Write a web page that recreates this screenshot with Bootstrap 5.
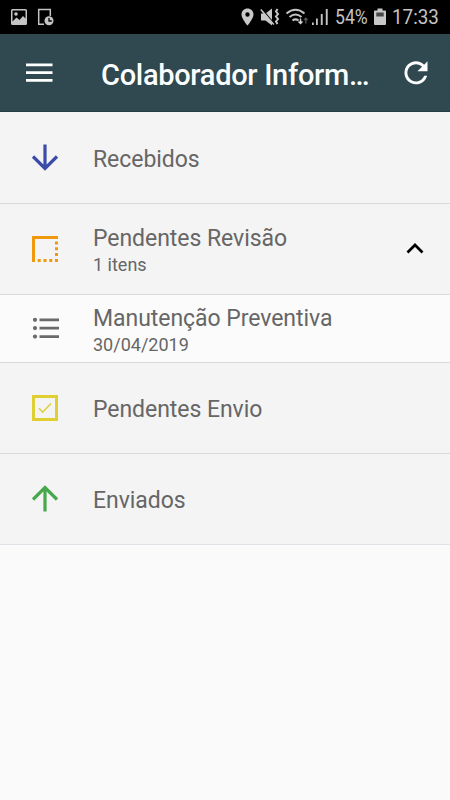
<!DOCTYPE html>
<html lang="pt-BR">
<head>
<meta charset="utf-8">
<meta name="viewport" content="width=device-width, initial-scale=1">
<title>Colaborador Informações</title>
<link href="https://cdn.jsdelivr.net/npm/bootstrap@5.3.0/dist/css/bootstrap.min.css" rel="stylesheet">
<style>
body{font-family:Roboto,"Liberation Sans",sans-serif;background:#fafafa;min-height:100vh;overflow:hidden}
svg{display:block;flex:none}
.status{height:34px;background:#000;color:#c4c4c4;font-size:20px;line-height:36px;padding:0 12px 0 10px}
.clock,.battery-text{white-space:nowrap}
.battery-text{width:34px;margin-left:5px}
.clock{width:46px;margin-left:6px}
.narrow{display:inline-block;transform-origin:0 50%}
.battery-text .narrow{transform:scale(.88,1.05)}
.clock .narrow{transform:scale(.94,1.05)}
.appbar{height:78px;background:#30484f;padding:0 20px 0 25px;border-bottom:1px solid #263d43}
.title{font-size:29px;letter-spacing:-.3px;font-weight:500;line-height:34px;color:#fafefe;width:275px;margin:4px 0 0 48px;white-space:nowrap}
.menu-list .list-group-item{height:91px;padding:0 21px 0 31px;gap:34px;background:#f4f4f4;border-color:#dadada;border-width:0 0 1px;color:#666}
.menu-list .list-group-item:first-child{height:92px}
.menu-list .sub-item{height:68px;background:#fbfbfb}
.label{font-size:23px;letter-spacing:-.05px;line-height:28px;padding-top:4px}
.detail{font-size:18px;line-height:24px;margin-top:-1px}
div.label{padding-top:3px}
div.label+.detail{margin-top:0}
.sub-item .label{padding-top:4px}
</style>
<script src="https://cdn.jsdelivr.net/npm/bootstrap@5.3.0/dist/js/bootstrap.bundle.min.js"></script>
</head>
<body>
<header>
  <div class="status d-flex align-items-center">
    <svg width="46" height="34" viewBox="10 0 46 34">
      <path fill="#c4c4c4" fill-rule="evenodd" d="M12.500 9h13q1.500 0 1.500 1.500v13q0 1.500-1.500 1.500h-13q-1.500 0-1.500-1.500v-13q0-1.500 1.500-1.500zM12.500 10.500v11l4-4 3 2.500 3.500-4 2.500 2.500v-8z"/>
      <circle cx="16" cy="14" r="1.800" fill="#c4c4c4"/>
      <path d="M44 24.200H38.700V9.500H50.300V16" fill="none" stroke="#c4c4c4" stroke-width="1.500"/>
      <circle cx="49" cy="20.800" r="4.500" fill="#c4c4c4"/><path d="M49 18v3h2.800" fill="none" stroke="#000" stroke-width="1.300"/>
    </svg>
    <svg class="ms-auto" width="90" height="34" viewBox="240 0 90 34">
      <path fill="#c8c8c8" fill-rule="evenodd" d="M247.500 8.500c-3.500 0-6 2.600-6 6 0 4.300 6 11 6 11s6-6.700 6-11c0-3.400-2.500-6-6-6zm0 3.800a2.200 2.200 0 1 1 0 4.400 2.200 2.200 0 0 1 0-4.400z"/>
      <path fill="#c8c8c8" d="M261 13.500h4.500l6.500-5v17l-6.500-5H261z"/>
      <path d="M261.500 8.500l12.500 15" stroke="#000" stroke-width="1.200"/><path d="M260.800 9.500l13 15" stroke="#c8c8c8" stroke-width="1.500"/>
      <path d="M277.500 9l-1.500 2.500 2 2.500-2 2.500 2 2.500-2 2.500 1.500 2.500" fill="none" stroke="#c8c8c8" stroke-width="2"/>
      <g fill="none" stroke="#c4c4c4" stroke-width="2"><path d="M286.500 13.500q9-7.500 18 0M289.500 17q6-5 12 0M292.500 20.500q3-2.300 6 0"/></g>
      <path d="M300.500 18.500v4.500M298.500 21.500l2 2 2-2" fill="none" stroke="#d0d0d0" stroke-width="1.500"/>
      <path d="M305.800 23.500v-5M304 20l1.800-1.800 1.800 1.800" fill="none" stroke="#555" stroke-width="1.300"/>
      <path fill="#c4c4c4" d="M312 22.500h1.800V25H312zM316 18.500h1.800V25H316zM320.800 14h1.900v11h-1.900zM325.800 9h1.900v16h-1.900z"/>
    </svg>
    <span class="battery-text"><span class="narrow">54%</span></span>
    <svg class="ms-1" width="13" height="34" viewBox="373 0 13 34"><path fill="#c8c8c8" d="M377.500 8.500h5v2h2.500q1 0 1 1V24q0 1-1 1h-10q-1 0-1-1V11.500q0-1 1-1h2.500z"/><path fill="#484848" d="M376.300 12.500h7.400v4h-7.400z"/></svg>
    <span class="clock"><span class="narrow">17:33</span></span>
  </div>
  <nav class="appbar d-flex align-items-center" aria-label="Principal">
    <svg width="28" height="78" viewBox="25 34 28 78"><path fill="#fff" d="M26 63.500h26.500v2.800H26zM26 71.200h26.500v2.800H26zM26 79h26.500v2.800H26z"/></svg>
    <h1 class="title">Colaborador Inform…</h1>
    <svg class="ms-auto" width="28" height="78" viewBox="402 34 28 78"><path fill="#fff" transform="translate(398.700 55.500) scale(1.440)" d="M17.650 6.350C16.200 4.900 14.210 4 12 4c-4.420 0-7.990 3.580-7.990 8s3.570 8 7.990 8c3.730 0 6.840-2.550 7.730-6h-2.080c-.82 2.330-3.040 4-5.650 4-3.310 0-6-2.690-6-6s2.690-6 6-6c1.660 0 3.140.69 4.220 1.780L13 11h7V4l-2.350 2.350z"/></svg>
  </nav>
</header>
<main class="list-group list-group-flush menu-list">
  <div class="list-group-item d-flex align-items-center">
    <svg width="28" height="28" viewBox="0 0 28 28"><path d="M14 .5v24M2 12.500l12 12 12-12" fill="none" stroke="#3b4ba8" stroke-width="3.200"/></svg>
    <span class="label">Recebidos</span>
  </div>
  <div class="list-group-item d-flex align-items-center">
    <svg width="28" height="28" viewBox="0 0 28 28" fill="#f0990f"><path d="M1 1h26v3H4v23H1zM24 6.500h3v3h-3zM24 12.300h3v3h-3zM24 18.100h3v3h-3zM24 24h3v3h-3zM6.700 24h3v3h-3zM12.500 24h3v3h-3zM18.300 24h3v3h-3z"/></svg>
    <div><div class="label">Pendentes Revisão</div><div class="detail">1 itens</div></div>
    <svg class="ms-auto" width="28" height="28" viewBox="0 0 28 28"><path d="M6.500 17.500l7.500-7.500 7.500 7.500" fill="none" stroke="#000" stroke-width="2.700"/></svg>
  </div>
  <div class="list-group-item sub-item d-flex align-items-center">
    <svg width="28" height="28" viewBox="0 0 28 28" fill="#6a6a6a"><path d="M8.500 3.500h19.500v2.700H8.500zM8.500 11.800h19.500v2.700H8.500zM8.500 20.300h19.500v2.700H8.500z"/><circle cx="4" cy="4.800" r="2.100"/><circle cx="4" cy="13.100" r="2.100"/><circle cx="4" cy="21.600" r="2.100"/></svg>
    <div><div class="label">Manutenção Preventiva</div><div class="detail">30/04/2019</div></div>
  </div>
  <div class="list-group-item d-flex align-items-center">
    <svg width="28" height="28" viewBox="0 0 28 28" fill="none" stroke="#dfcf33"><path d="M2.500 2.500h23v23h-23z" stroke-width="3"/><path d="M8 14.200l3.700 4L20 9.500" stroke-width="1.500"/></svg>
    <span class="label">Pendentes Envio</span>
  </div>
  <div class="list-group-item d-flex align-items-center border-bottom">
    <svg width="28" height="28" viewBox="0 0 28 28"><path d="M14 26.500V2.500M2 14.500l12-12 12 12" fill="none" stroke="#47a84b" stroke-width="3.200"/></svg>
    <span class="label">Enviados</span>
  </div>
</main>
</body>
</html>
